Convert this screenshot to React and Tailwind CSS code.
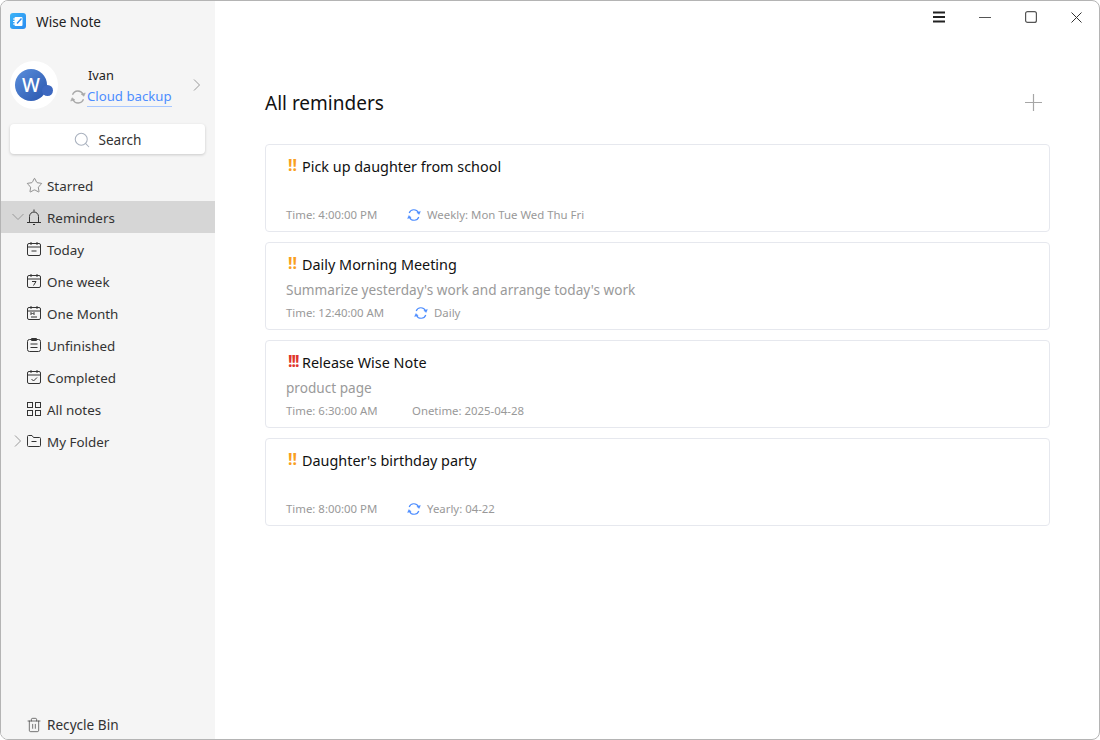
import { Search, Star, Trash2 } from 'lucide-react';

function CalIcon({ children }) {
  return (
    <svg width="16" height="16" viewBox="0 0 16 16" fill="none" stroke="#333" strokeWidth="1" className="shrink-0">
      <rect x="1.5" y="2.5" width="13" height="12" rx="1.5" />
      <path d="M1.5 6h13M5 1v3M11 1v3" />
      {children}
    </svg>
  );
}

function BellIcon() {
  return (
    <svg width="16" height="16" viewBox="0 0 16 16" fill="none" stroke="#333" strokeWidth="1" className="shrink-0">
      <path d="M8 0.5v2M3.5 13V7.5a4.5 4.5 0 0 1 9 0V13M1 13.5h14" />
      <path d="M7 15.5h2" />
    </svg>
  );
}

function FolderIcon() {
  return (
    <svg width="16" height="16" viewBox="0 0 16 16" fill="none" stroke="#333" strokeWidth="1" className="shrink-0">
      <path d="M1.5 3.5a1 1 0 0 1 1-1h3.5l1.5 2h6a1 1 0 0 1 1 1v7a1 1 0 0 1-1 1h-11a1 1 0 0 1-1-1z" />
      <path d="M5.5 8.5h5" />
    </svg>
  );
}

function ClipIcon() {
  return (
    <svg width="16" height="16" viewBox="0 0 16 16" fill="none" stroke="#333" strokeWidth="1" className="shrink-0">
      <rect x="1.5" y="2.5" width="13" height="12" rx="2" />
      <path d="M5.5 1.5h5v2h-5zM4.5 7h7M4.5 10.5h7" />
    </svg>
  );
}

function GridIcon() {
  return (
    <svg width="16" height="16" viewBox="0 0 16 16" fill="none" stroke="#333" strokeWidth="1" className="shrink-0">
      <rect x="1.5" y="1.5" width="5" height="5" />
      <rect x="9.5" y="1.5" width="5" height="5" />
      <rect x="1.5" y="9.5" width="5" height="5" />
      <rect x="9.5" y="9.5" width="5" height="5" />
    </svg>
  );
}

function Caret({ down }) {
  return (
    <svg width="12" height="12" viewBox="0 0 12 12" fill="none" stroke="#999" strokeWidth="1">
      <path d={down ? 'M0.5 3 6 8.5 11.5 3' : 'M3 0.5 8.5 6 3 11.5'} />
    </svg>
  );
}

function SyncIcon({ color = '#4d8dff', size = 14 }) {
  return (
    <svg width={size} height={size} viewBox="0 0 14 14" fill="none" stroke={color} strokeWidth="1.2" className="shrink-0">
      <path d="M2.2 5A5 5 0 0 1 11.4 4.6" />
      <path d="M11.8 9A5 5 0 0 1 2.6 9.4" />
      <path d="M13.4 3.4 12.2 6.4 9.8 4.6z" fill={color} strokeWidth="0.4" />
      <path d="M0.6 10.6 1.8 7.6 4.2 9.4z" fill={color} strokeWidth="0.4" />
    </svg>
  );
}

const navItems = [
  { label: 'Starred', icon: <Star size={17} strokeWidth={1} color="#666" /> },
  { label: 'Reminders', icon: <BellIcon />, active: true, caret: 'down' },
  { label: 'Today', icon: <CalIcon><path d="M5.5 10h5" /></CalIcon> },
  { label: 'One week', icon: <CalIcon><path d="M6 8.5h4L7.5 12.5" /></CalIcon> },
  { label: 'One Month', icon: <CalIcon><path d="M5 10V7.5l1.5 1.5L8 7.5V10M5 12h6" /></CalIcon> },
  { label: 'Unfinished', icon: <ClipIcon /> },
  { label: 'Completed', icon: <CalIcon><path d="m5.5 10 2 2 3.5-3.5" /></CalIcon> },
  { label: 'All notes', icon: <GridIcon /> },
  { label: 'My Folder', icon: <FolderIcon />, caret: 'right' },
];

const reminders = [
  { level: '!!', title: 'Pick up daughter from school', note: '', time: 'Time: 4:00:00 PM', repeat: 'Weekly: Mon Tue Wed Thu Fri', gap: 'w-[121px]' },
  { level: '!!', title: 'Daily Morning Meeting', note: "Summarize yesterday's work and arrange today's work", time: 'Time: 12:40:00 AM', repeat: 'Daily', gap: 'w-[128px]' },
  { level: '!!!', title: 'Release Wise Note', note: 'product page', time: 'Time: 6:30:00 AM', repeat: 'Onetime: 2025-04-28', gap: 'w-[126px]', once: true },
  { level: '!!', title: "Daughter's birthday party", note: '', time: 'Time: 8:00:00 PM', repeat: 'Yearly: 04-22', gap: 'w-[121px]' },
];

function ReminderCard({ item }) {
  const high = item.level === '!!!';
  return (
    <div className="h-[88px] rounded-[4px] border border-[#e6e8ee] bg-white pl-5 pr-4 flex flex-col">
      <div className="h-[22px] mt-[11px] flex items-center text-[14.4px] text-[#111]">
        <span className={high ? 'w-4 shrink-0 pl-[2px] font-bold text-[16px] tracking-[-1px] text-[#e0362c] -translate-y-[2px] whitespace-nowrap' : 'w-4 shrink-0 pl-[2px] font-bold text-[16px] text-[#f9a01e] -translate-y-[2px]'}>
          {item.level}
        </span>
        <span>{item.title}</span>
      </div>
      <div className="h-[22px] mt-[3px] flex items-center text-[13.6px] text-[#9a9a9a]">{item.note}</div>
      <div className="h-[18px] mt-[3px] flex items-center text-[11.4px] text-[#999]">
        <span className={`${item.gap} shrink-0`}>{item.time}</span>
        {item.once ? null : <SyncIcon />}
        <span className={item.once ? '' : 'ml-[6px]'}>{item.repeat}</span>
      </div>
    </div>
  );
}

export default function App() {
  return (
    <div className="w-[1100px] h-[740px] bg-white overflow-hidden font-['Noto_Sans',sans-serif]">
      <div className="h-full flex rounded-[8px] border border-[#b4b4b4] overflow-hidden bg-white">
        <aside className="w-[214px] shrink-0 bg-[#f5f5f5] flex flex-col">
          <div className="h-[40px] pl-[9px] flex items-center gap-[10px]">
            <div className="w-4 h-4 rounded-[3px] bg-gradient-to-br from-[#3db4f7] to-[#2a8bf0] flex items-center justify-center">
              <svg width="13" height="13" viewBox="0 0 13 13" fill="none">
                <rect x="2.5" y="2" width="8" height="9" rx="1" fill="white" />
                <path d="M1 4h3M1 6.5h3M1 9h3" stroke="white" strokeWidth="1" />
                <path d="M5 8.5 9.5 3.5" stroke="#2a8bf0" strokeWidth="1.4" />
              </svg>
            </div>
            <span className="pt-[2px] text-[13.6px] text-[#222]">Wise Note</span>
          </div>

          <div className="h-[48px] mt-[20px] pl-[9px] flex items-center">
            <div className="w-[48px] h-[48px] rounded-full bg-white flex items-center relative shrink-0">
              <div className="ml-[5px] w-[32px] h-[32px] rounded-full bg-gradient-to-br from-[#5b8fdc] to-[#2a55ad] flex items-center justify-center text-white text-[19px] font-medium">W</div>
              <div className="absolute left-[32px] top-[24px] w-[11px] h-[11px] rounded-full bg-[#3d68c0]" />
            </div>
            <div className="ml-[12px] w-[104px] shrink-0 whitespace-nowrap">
              <div className="pl-[18px] text-[12.8px] leading-[22px] text-[#222]">Ivan</div>
              <div className="flex items-center gap-[1px] translate-y-px text-[13.2px] leading-[20px] text-[#4d8dff]">
                <SyncIcon color="#a8a8a8" size={16} />
                <span className="border-b border-[#a9c8ff] leading-[19px]">Cloud backup</span>
              </div>
            </div>
            <span className="ml-[17px]"><Caret /></span>
          </div>

          <div className="ml-[9px] mr-[10px] mt-[15px] h-[30px] pt-[2px] rounded-[4px] bg-white shadow-[0_1px_3px_rgba(0,0,0,0.18)] flex items-center justify-center gap-[7px] text-[13.6px] text-[#333]">
            <Search size={18} strokeWidth={1.4} color="#aab2bf" />
            Search
          </div>

          <nav className="mt-[15px] flex flex-col">
            {navItems.map((item) => (
              <div key={item.label} className={`h-[32px] flex items-center text-[13.4px] text-[#333] ${item.active ? 'bg-[#d6d6d6]' : ''}`}>
                <span className="w-[25px] pl-[11px] shrink-0 flex items-center">
                  {item.caret === 'down' && <Caret down />}
                  {item.caret === 'right' && <Caret />}
                </span>
                <span className="w-[21px] shrink-0 flex items-center">{item.icon}</span>
                <span className="pt-[2px]">{item.label}</span>
              </div>
            ))}
          </nav>

          <div className="mt-auto h-[28px] pl-[25px] flex items-center text-[13.6px] text-[#333]">
            <span className="w-[21px] shrink-0 flex items-center"><Trash2 size={16} strokeWidth={1} color="#333" /></span>
            Recycle Bin
          </div>
        </aside>

        <main className="flex-1 min-w-0 flex flex-col">
          <div className="h-[32px] flex items-center justify-end">
            <svg width="12" height="12" viewBox="0 0 12 12" stroke="#222" strokeWidth="2"><path d="M0 1.5h12M0 6h12M0 10.5h12" /></svg>
            <svg width="12" height="12" viewBox="0 0 12 12" stroke="#555" strokeWidth="1.2" className="ml-[34px]"><path d="M0 6.5h12" /></svg>
            <svg width="12" height="12" viewBox="0 0 12 12" fill="none" stroke="#555" strokeWidth="1.2" className="ml-[34px]"><rect x="0.6" y="0.6" width="10.8" height="10.8" rx="2" /></svg>
            <svg width="11" height="11" viewBox="0 0 11 11" stroke="#333" strokeWidth="1" className="ml-[34px] mr-[17px]"><path d="M0.5 0.5l10 10M10.5 0.5l-10 10" /></svg>
          </div>
          <div className="mt-[52px] pl-[50px] pr-[49px]">
            <div className="h-[36px] flex items-center justify-between">
              <h1 className="text-[19px] text-[#111]">All reminders</h1>
              <svg width="17" height="17" viewBox="0 0 17 17" stroke="#a6a6a6" strokeWidth="1.2" className="mr-[8px] -translate-y-px"><path d="M8.5 0v17M0 8.5h17" /></svg>
            </div>
            <div className="mt-[23px] flex flex-col gap-[10px]">
              {reminders.map((r) => <ReminderCard key={r.title} item={r} />)}
            </div>
          </div>
        </main>
      </div>
    </div>
  );
}
